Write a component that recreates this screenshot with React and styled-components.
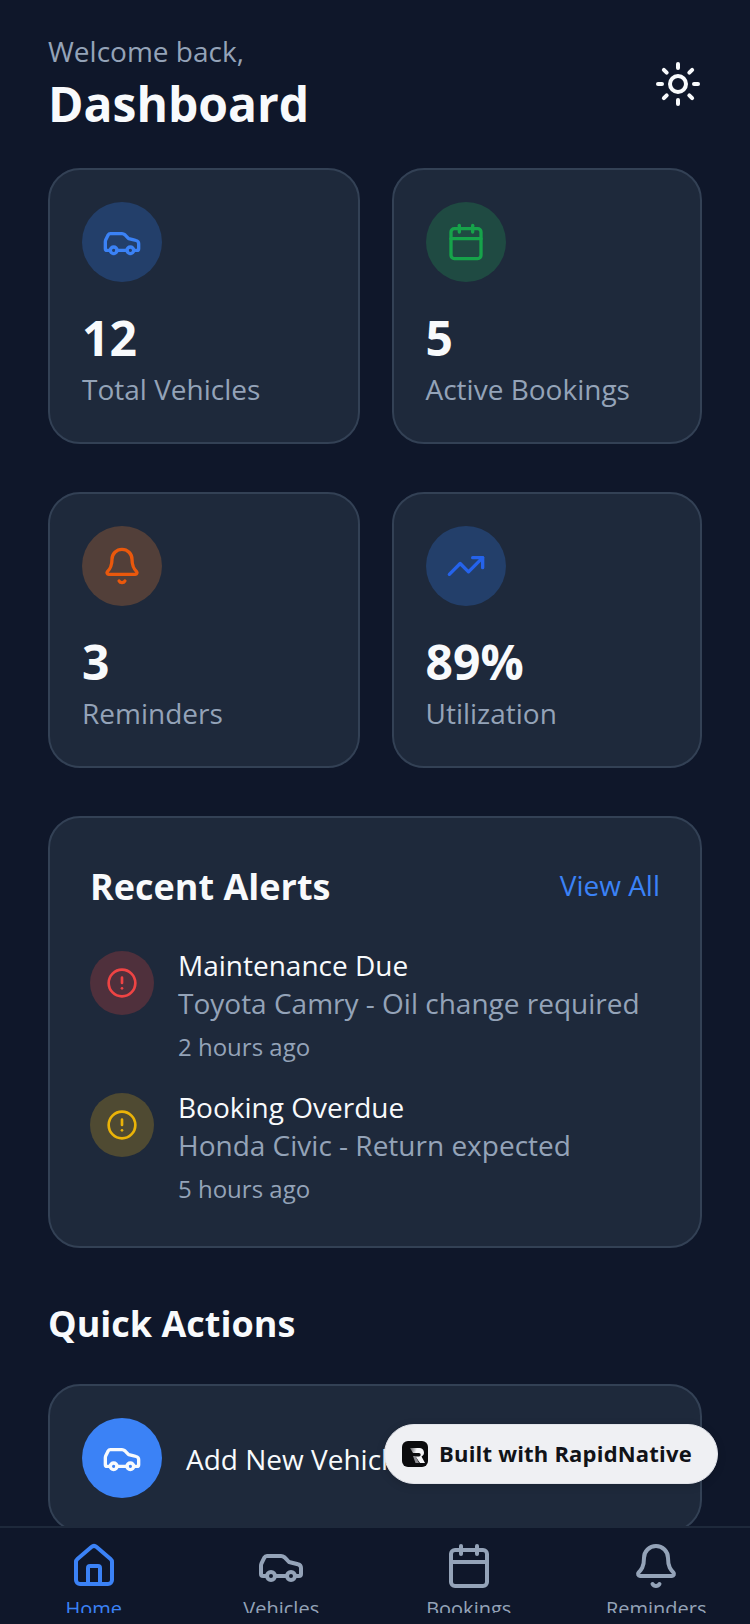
import React from "react";
import styled, { createGlobalStyle } from "styled-components";
import { Car, Calendar, Bell, TrendingUp, CircleAlert, Sun, House } from "lucide-react";

const Global = createGlobalStyle`
  html, body { margin: 0; padding: 0; background: #0f172a; }
  * { box-sizing: border-box; }
  body { font-family: "Open Sans", "Noto Sans", sans-serif; }
`;

const Screen = styled.div`
  position: relative;
  width: 750px;
  height: 1624px;
  display: flex;
  flex-direction: column;
  overflow: hidden;
  background: #0f172a;
`;
const Scroll = styled.main`
  height: 1527px;
  flex: none;
  overflow: hidden;
  padding: 32px 48px 0;
  display: flex;
  flex-direction: column;
`;
const Header = styled.header`
  display: flex;
  justify-content: space-between;
  align-items: center;
  height: 104px;
  margin-bottom: 32px;
`;
const Welcome = styled.div`
  font-size: 28px;
  line-height: 38px;
  margin-bottom: 2px;
  color: #94a3b8;
`;
const Title = styled.h1`
  margin: 0;
  font-size: 48px;
  line-height: 64px;
  font-weight: 700;
  color: #f8fafc;
`;
const Theme = styled.div`
  width: 48px;
  height: 48px;
  color: #f8fafc;
  display: flex;
`;
const StatGrid = styled.section`
  display: grid;
  grid-template-columns: 311.5px 310.5px;
  column-gap: 32px;
  row-gap: 48px;
`;
const Card = styled.div`
  background: #1e293b;
  border: 2px solid #334155;
  border-radius: 32px;
  padding: 32px;
`;
const Stat = styled(Card)`
  height: 276px;
`;
const Circle = styled.div`
  width: ${(p) => p.$size}px;
  height: ${(p) => p.$size}px;
  flex: none;
  border-radius: 50%;
  background: ${(p) => p.$bg};
  color: ${(p) => p.$fg};
  display: flex;
  align-items: center;
  justify-content: center;
`;
const AlertCircle = styled(Circle)`
  margin-top: 6px;
`;
const StatValue = styled.div`
  margin-top: 24px;
  font-size: 48px;
  line-height: 64px;
  font-weight: 700;
  color: #f8fafc;
`;
const StatLabel = styled.div`
  font-size: 28px;
  line-height: 38px;
  color: #94a3b8;
`;
const Alerts = styled(Card)`
  margin-top: 48px;
  height: 432px;
  flex: none;
  padding: 42px 40px 0;
`;
const AlertHead = styled.div`
  display: flex;
  justify-content: space-between;
  align-items: center;
  height: 54px;
  margin-bottom: 31px;
`;
const SectionTitle = styled.h2`
  margin: 0;
  font-size: 36px;
  line-height: 54px;
  font-weight: 700;
  color: #f8fafc;
`;
const ViewAll = styled.span`
  font-size: 28px;
  line-height: 40px;
  color: #3b82f6;
  margin-top: -4px;
`;
const AlertRow = styled.div`
  display: flex;
  gap: 24px;
  margin-bottom: 24px;
`;
const AlertBody = styled.div`
  display: flex;
  flex-direction: column;
`;
const AlertTitle = styled.div`
  font-size: 28px;
  line-height: 38px;
  margin: 1px 0 -1px;
  font-weight: 400;
  color: #f8fafc;
`;
const AlertSub = styled.div`
  font-size: 28px;
  line-height: 40px;
  color: #94a3b8;
`;
const AlertTime = styled.div`
  margin-top: 8px;
  font-size: 24px;
  line-height: 32px;
  color: #94a3b8;
`;
const Quick = styled(SectionTitle)`
  margin-top: 49px;
`;
const Action = styled(Card)`
  margin-top: 33px;
  display: flex;
  align-items: center;
  gap: 24px;
  flex: none;
  height: 148px;
`;
const ActionLabel = styled.span`
  font-size: 28px;
  line-height: 40px;
  margin-top: 2px;
  color: #f8fafc;
`;
const Tabs = styled.nav`
  flex: none;
  height: 97px;
  border-top: 2px solid #1e293b;
  background: #0f172a;
  display: grid;
  grid-template-columns: repeat(4, 1fr);
  padding: 14px 0 10px;
  margin-top: -1px;
  position: relative;
  overflow: hidden;
`;
const Tab = styled.div`
  display: flex;
  flex-direction: column;
  align-items: center;
  overflow: hidden;
  color: ${(p) => (p.$active ? "#3b82f6" : "#94a3b8")};
  height: 100%;
  & > svg {
    flex: none;
  }
`;
const TabLabel = styled.span`
  margin-top: 5px;
  font-size: 20px;
  line-height: 28px;
  white-space: nowrap;
`;
const Badge = styled.div`
  position: absolute;
  left: 384px;
  top: 1424px;
  width: 334px;
  height: 60px;
  border-radius: 30px;
  background: #eff0f3;
  border: 1px solid #e2e4ea;
  box-shadow: 0 2px 8px rgba(0, 0, 0, 0.15);
  display: flex;
  align-items: center;
  gap: 11px;
  padding-left: 17px;
`;
const BadgeText = styled.span`
  margin-top: -2px;
  font-size: 22px;
  font-weight: 700;
  color: #111318;
  letter-spacing: 0.2px;
`;

const stats = [
  { Icon: Car, v: "12", l: "Total Vehicles", fg: "#3b82f6", bg: "#233f6a" },
  { Icon: Calendar, v: "5", l: "Active Bookings", fg: "#16a34a", bg: "#1f4a42" },
  { Icon: Bell, v: "3", l: "Reminders", fg: "#ea580c", bg: "#523f39" },
  { Icon: TrendingUp, v: "89%", l: "Utilization", fg: "#2563eb", bg: "#233f6a" },
];
const alerts = [
  { t: "Maintenance Due", s: "Toyota Camry - Oil change required", w: "2 hours ago", fg: "#ef4444", bg: "#4f303c" },
  { t: "Booking Overdue", s: "Honda Civic - Return expected", w: "5 hours ago", fg: "#eab308", bg: "#4f4a32" },
];
const tabs = [
  { Icon: House, l: "Home", active: true },
  { Icon: Car, l: "Vehicles" },
  { Icon: Calendar, l: "Bookings" },
  { Icon: Bell, l: "Reminders" },
];

const Logo = () => (
  <svg width="26" height="26" viewBox="0 0 26 26">
    <defs>
      <linearGradient id="rn" x1="0" x2="1" y1="0" y2="0.3">
        <stop offset="0" stopColor="#55555a" />
        <stop offset="0.45" stopColor="#f6f6f8" />
      </linearGradient>
    </defs>
    <rect width="26" height="26" rx="6" fill="#0b0b0d" />
    <path d="M8 7h9.5a4.5 4.5 0 0 1 2 8.5L23 22h-5l-4.5-6.5h3.5a1.7 1.7 0 0 0 0-3.4H11z" fill="url(#rn)" />
    <path d="M11 15h2.5l3.5 7h-3.5z" fill="#8d8d92" />
  </svg>
);

export default function App() {
  return (
    <Screen>
      <Global />
      <Scroll>
        <Header>
          <div>
            <Welcome>Welcome back,</Welcome>
            <Title>Dashboard</Title>
          </div>
          <Theme>
            <Sun size={48} strokeWidth={2} />
          </Theme>
        </Header>
        <StatGrid>
          {stats.map(({ Icon, v, l, fg, bg }) => (
            <Stat key={l}>
              <Circle $size={80} $bg={bg} $fg={fg}>
                <Icon size={40} strokeWidth={2} />
              </Circle>
              <StatValue>{v}</StatValue>
              <StatLabel>{l}</StatLabel>
            </Stat>
          ))}
        </StatGrid>
        <Alerts>
          <AlertHead>
            <SectionTitle>Recent Alerts</SectionTitle>
            <ViewAll>View All</ViewAll>
          </AlertHead>
          {alerts.map((a) => (
            <AlertRow key={a.t}>
              <AlertCircle $size={64} $bg={a.bg} $fg={a.fg}>
                <CircleAlert size={32} strokeWidth={2} />
              </AlertCircle>
              <AlertBody>
                <AlertTitle>{a.t}</AlertTitle>
                <AlertSub>{a.s}</AlertSub>
                <AlertTime>{a.w}</AlertTime>
              </AlertBody>
            </AlertRow>
          ))}
        </Alerts>
        <Quick>Quick Actions</Quick>
        <Action>
          <Circle $size={80} $bg="#3b82f6" $fg="#f8fafc">
            <Car size={40} strokeWidth={2} />
          </Circle>
          <ActionLabel>Add New Vehicle</ActionLabel>
        </Action>
      </Scroll>
      <Tabs>
        {tabs.map(({ Icon, l, active }) => (
          <Tab key={l} $active={active}>
            <Icon size={48} strokeWidth={2} />
            <TabLabel>{l}</TabLabel>
          </Tab>
        ))}
      </Tabs>
      <Badge>
        <Logo />
        <BadgeText>Built with RapidNative</BadgeText>
      </Badge>
    </Screen>
  );
}
